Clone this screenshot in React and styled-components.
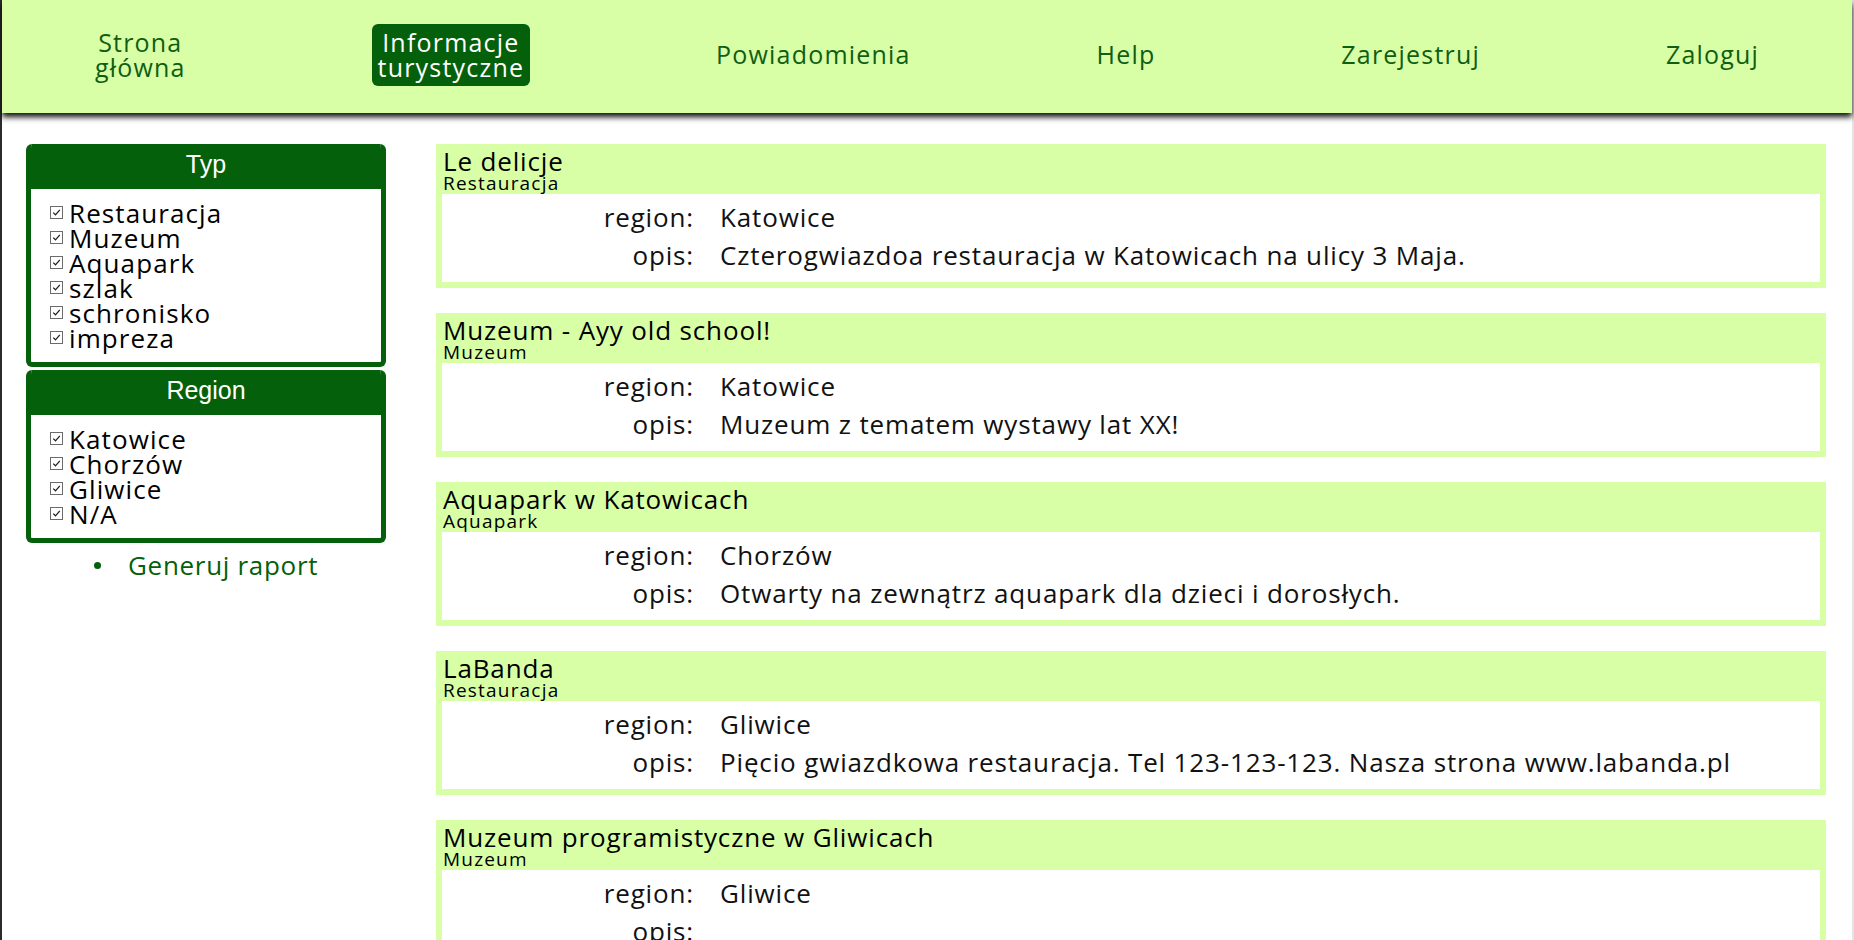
import React from 'react';
import styled, { createGlobalStyle } from 'styled-components';

const GREEN = '#04600a';
const LIGHT = '#d8ffa6';

const GlobalStyle = createGlobalStyle`
  html, body {
    margin: 0;
    padding: 0;
    background: #fff;
  }
  body {
    font-family: 'Open Sans', 'Liberation Sans', sans-serif;
  }
`;

const Page = styled.div`
  min-height: 100vh;
  border-left: 2px solid #2b2b2b;
  border-right: 2px solid #e4e4e4;
  box-sizing: border-box;
`;

const Nav = styled.nav`
  height: 113px;
  padding-bottom: 4px;
  box-sizing: border-box;
  background: ${LIGHT};
  display: flex;
  align-items: center;
  justify-content: space-around;
  box-shadow: 0 4px 6px rgba(0, 0, 0, 0.95);
  position: relative;
  z-index: 1;
`;

const NavItem = styled.a`
  font-family: 'Open Sans', sans-serif;
  font-size: 25px;
  letter-spacing: 1.2px;
  line-height: 25px;
  text-align: center;
  white-space: pre-line;
  color: ${(p) => (p.$active ? '#fff' : '#0f5e12')};
  background: ${(p) => (p.$active ? GREEN : 'transparent')};
  border-radius: 6px;
  padding: ${(p) => (p.$active ? '6px 6px' : '0')};
  text-decoration: none;
`;

const Layout = styled.div`
  display: grid;
  grid-template-columns: 360px 1fr;
  gap: 50px;
  padding: 31px 24px 0 24px;
`;

const Sidebar = styled.aside`
  display: flex;
  flex-direction: column;
  gap: 3px;
`;

const Filter = styled.section`
  border: 5px solid ${GREEN};
  border-top: 0;
  border-radius: 6px;
  background: #fff;
  overflow: hidden;
`;

const FilterHead = styled.div`
  background: ${GREEN};
  color: #fff;
  font-family: 'Liberation Sans', Arial, sans-serif;
  font-size: 25px;
  height: 45px;
  display: flex;
  align-items: center;
  justify-content: center;
  padding-bottom: 4px;
  box-sizing: border-box;
`;

const FilterList = styled.div`
  padding: 11px 0 12px 19px;
  display: flex;
  flex-direction: column;
`;

const Option = styled.label`
  display: flex;
  align-items: center;
  gap: 6px;
  height: 25px;
  font-family: 'Open Sans', sans-serif;
  font-size: 26px;
  letter-spacing: 1.1px;
  color: #000;
`;

const Box = styled.span`
  width: 11px;
  height: 11px;
  border: 1px solid #6b6b6b;
  background: #fff;
  display: inline-flex;
  align-items: center;
  justify-content: center;
  flex: none;
`;

const Action = styled.div`
  display: flex;
  align-items: center;
  gap: 27px;
  padding: 3px 0 0 68px;
  height: 32px;
`;

const Dot = styled.span`
  width: 7px;
  height: 7px;
  border-radius: 50%;
  background: ${GREEN};
  flex: none;
`;

const ActionLink = styled.a`
  font-family: 'Open Sans', sans-serif;
  font-size: 26px;
  letter-spacing: 0.7px;
  color: ${GREEN};
  text-decoration: none;
`;

const Cards = styled.main`
  display: flex;
  flex-direction: column;
  gap: 25px;
  padding-right: 2px;
`;

const Card = styled.article`
  border: 6px solid ${LIGHT};
  background: #fff;
`;

const CardHead = styled.header`
  background: ${LIGHT};
  padding: 0 1px;
  height: 44px;
  display: flex;
  flex-direction: column;
  justify-content: flex-start;
`;

const CardTitle = styled.div`
  font-family: 'Open Sans', sans-serif;
  font-size: 26px;
  letter-spacing: 0.85px;
  line-height: 23px;
  color: #000;
`;

const CardType = styled.div`
  font-family: 'Open Sans', sans-serif;
  font-size: 19px;
  letter-spacing: 1.2px;
  line-height: 21px;
  color: #000;
`;

const Rows = styled.div`
  display: grid;
  grid-template-columns: 278px 1fr;
  padding: 4px 0 8px;
`;

const Label = styled.div`
  font-family: 'Open Sans', sans-serif;
  font-size: 26px;
  letter-spacing: 0.85px;
  height: 38px;
  line-height: 38px;
  text-align: right;
  padding-right: 26px;
  color: #111;
`;

const Value = styled.div`
  font-family: 'Open Sans', sans-serif;
  font-size: 26px;
  letter-spacing: 0.85px;
  height: 38px;
  line-height: 38px;
  color: #111;
  white-space: nowrap;
`;

const Check = () => (
  <Box>
    <svg width="9" height="9" viewBox="0 0 9 9">
      <path d="M1.2 4.6 L3.5 6.8 L7.8 1.8" fill="none" stroke="#222" strokeWidth="1.3" />
    </svg>
  </Box>
);

const navItems = [
  { label: 'Strona\ngłówna' },
  { label: 'Informacje\nturystyczne', active: true },
  { label: 'Powiadomienia' },
  { label: 'Help' },
  { label: 'Zarejestruj' },
  { label: 'Zaloguj' },
];

const filters = [
  { title: 'Typ', options: ['Restauracja', 'Muzeum', 'Aquapark', 'szlak', 'schronisko', 'impreza'] },
  { title: 'Region', options: ['Katowice', 'Chorzów', 'Gliwice', 'N/A'] },
];

const places = [
  {
    name: 'Le delicje',
    type: 'Restauracja',
    region: 'Katowice',
    desc: 'Czterogwiazdoa restauracja w Katowicach na ulicy 3 Maja.',
  },
  { name: 'Muzeum - Ayy old school!', type: 'Muzeum', region: 'Katowice', desc: 'Muzeum z tematem wystawy lat XX!' },
  {
    name: 'Aquapark w Katowicach',
    type: 'Aquapark',
    region: 'Chorzów',
    desc: 'Otwarty na zewnątrz aquapark dla dzieci i dorosłych.',
  },
  {
    name: 'LaBanda',
    type: 'Restauracja',
    region: 'Gliwice',
    desc: 'Pięcio gwiazdkowa restauracja. Tel 123-123-123. Nasza strona www.labanda.pl',
  },
  { name: 'Muzeum programistyczne w Gliwicach', type: 'Muzeum', region: 'Gliwice', desc: '' },
];

const App = () => {
  return (
    <Page>
      <GlobalStyle />
      <Nav>
        {navItems.map((item) => (
          <NavItem key={item.label} href="#" $active={item.active}>
            {item.label}
          </NavItem>
        ))}
      </Nav>
      <Layout>
        <Sidebar>
          {filters.map((f) => (
            <Filter key={f.title}>
              <FilterHead>{f.title}</FilterHead>
              <FilterList>
                {f.options.map((o) => (
                  <Option key={o}>
                    <Check />
                    {o}
                  </Option>
                ))}
              </FilterList>
            </Filter>
          ))}
          <Action>
            <Dot />
            <ActionLink href="#">Generuj raport</ActionLink>
          </Action>
        </Sidebar>
        <Cards>
          {places.map((p) => (
            <Card key={p.name}>
              <CardHead>
                <CardTitle>{p.name}</CardTitle>
                <CardType>{p.type}</CardType>
              </CardHead>
              <Rows>
                <Label>region:</Label>
                <Value>{p.region}</Value>
                <Label>opis:</Label>
                <Value>{p.desc}</Value>
              </Rows>
            </Card>
          ))}
        </Cards>
      </Layout>
    </Page>
  );
};

export default App;
